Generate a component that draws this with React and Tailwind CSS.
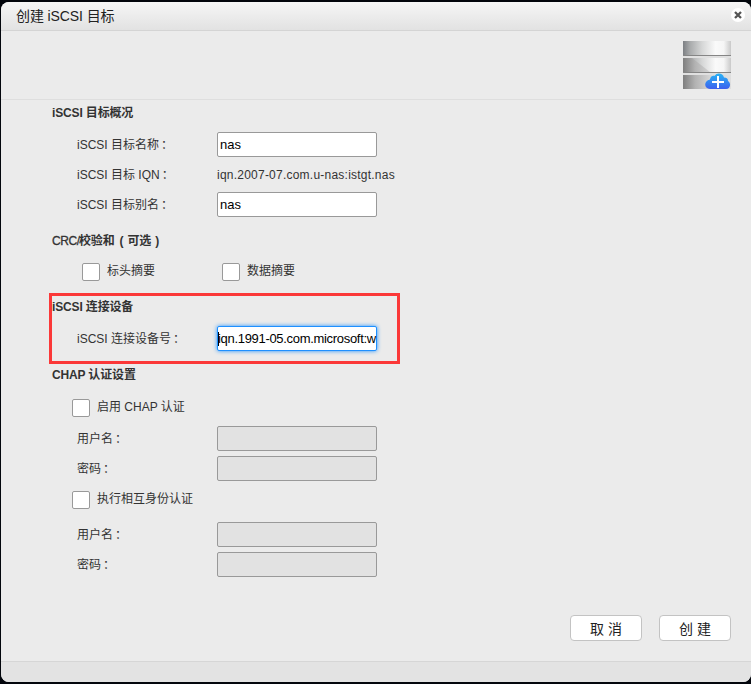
const inputBase = 'block h-[25px] w-[160px] rounded-[2px] border px-[2px] text-[13px] leading-[23px] outline-none';

function Heading({ children, className = '' }) {
  return (
    <h2 className={`flex items-center whitespace-pre text-[12px] font-bold tracking-[-0.15px] text-[#333] ${className}`}>
      {children}
    </h2>
  );
}

function Row({ label, children, className = '' }) {
  return (
    <div className={`flex h-[30px] items-start pt-[2px] leading-[27px] ${className}`}>
      <span className="w-[140px] shrink-0 whitespace-pre">
        {label}
        <span className="ml-[2px]">：</span>
      </span>
      {children}
    </div>
  );
}

function Field({ value = '', disabled = false }) {
  return (
    <input
      type="text"
      defaultValue={value}
      disabled={disabled}
      className={`${inputBase} border-[#999] ${disabled ? 'bg-[#e2e2e2]' : 'bg-white text-black'}`}
    />
  );
}

function Check({ children, className = '' }) {
  return (
    <label className={`flex h-[30px] items-center ${className}`}>
      <input type="checkbox" className="mr-[7px] size-[18px] shrink-0 appearance-none rounded-[2px] border border-[#999] bg-white" />
      <span className="-mt-[2px]">{children}</span>
    </label>
  );
}

function StorageIcon() {
  return (
    <svg width="48" height="49" viewBox="0 0 48 49">
      <defs>
        <linearGradient id="metal">
          <stop offset="0" stopColor="#7c7f83" />
          <stop offset=".15" stopColor="#a9abac" />
          <stop offset=".4" stopColor="#d6d7d7" />
          <stop offset=".68" stopColor="#fafafa" />
          <stop offset=".85" stopColor="#f5f5f5" />
          <stop offset="1" stopColor="#c9c9c9" />
        </linearGradient>
        <linearGradient id="shade" gradientUnits="userSpaceOnUse" x1="0" y1="0" x2="48" y2="0">
          <stop offset="0" stopColor="#7e7e7e" />
          <stop offset=".25" stopColor="#b2b2b2" />
          <stop offset=".6" stopColor="#d9d9d9" />
          <stop offset="1" stopColor="#dedede" />
        </linearGradient>
        <linearGradient id="cloud" x1="0" y1="0" x2="0" y2="1">
          <stop offset="0" stopColor="#28b4f5" />
          <stop offset="1" stopColor="#3c60ee" />
        </linearGradient>
      </defs>
      <rect y="0" width="48" height="14" fill="url(#metal)" />
      <rect y="14" width="48" height="1" fill="#858585" />
      <rect y="15" width="48" height="2" fill="#e0e0e0" />
      <rect y="17" width="48" height="14" fill="url(#metal)" />
      <path d="M0 17H9L27 31H0Z" fill="url(#shade)" />
      <rect y="31" width="48" height="1" fill="#858585" />
      <rect y="32" width="48" height="2" fill="#e0e0e0" />
      <rect y="34" width="48" height="14" fill="url(#shade)" />
      <path d="M27 48C20.700 48 20.500 39.500 27 38.500C27.500 34.500 30.700 34.500 31.500 35C34 31 40 32 41 36.500C44 36.500 45 38 45 40C48.500 42 47.500 48 43 48Z" fill="url(#cloud)" />
      <path d="M35 35v12M29 41h12" stroke="#fff" strokeWidth="2" />
    </svg>
  );
}

function ActionButton({ children }) {
  return (
    <button className="h-[26px] w-[72px] rounded-[4px] border border-[#c3c3c3] bg-white pt-[2px] text-[14px] leading-[22px] text-[#222]">
      {children}
    </button>
  );
}

export default function App() {
  return (
    <div className="h-[684px] w-[751px] overflow-hidden bg-[#03060c] pt-[2px] pl-px font-['Liberation_Sans','Noto_Sans_CJK_SC',sans-serif] text-[12px] leading-[18px] text-[#333]">
      <div className="flex h-[680px] w-[750px] flex-col overflow-hidden rounded-[8px] bg-[#ebebeb]">
        <header className="flex h-[29px] shrink-0 items-center justify-between border-b border-[#d4d4d4] bg-linear-to-b from-[#f6f6f6] to-[#e2e2e2] pr-[6px] pl-[15px]">
          <h1 className="text-[14px] tracking-[-0.1px] text-[#222]">创建 iSCSI 目标</h1>
          <button className="-mt-[2px] flex size-[14px] items-center justify-center rounded-full bg-white" aria-label="关闭">
            <svg width="8" height="8" viewBox="0 0 8 8">
              <path d="M1 1L7 7M7 1L1 7" stroke="#555" strokeWidth="2.300" />
            </svg>
          </button>
        </header>
        <div className="flex h-[69px] shrink-0 justify-end border-b border-[#dedede] pt-[10px] pr-[20px]">
          <StorageIcon />
        </div>

        <main className="flex flex-1 flex-col pl-[51px]">
          <Heading className="h-[25px]">iSCSI 目标概况</Heading>
          <div className="mt-[5px] pl-[25px]">
            <Row label="iSCSI 目标名称"><Field value="nas" /></Row>
            <Row label="iSCSI 目标 IQN"><span className="tracking-[0.23px]">iqn.2007-07.com.u-nas:istgt.nas</span></Row>
            <Row label="iSCSI 目标别名"><Field value="nas" /></Row>
          </div>

          <Heading className="mt-[8px] h-[25px]">
            <span className="w-[27px] font-normal tracking-[-0.400px] [-webkit-text-stroke:0.300px_#333]">CRC/</span>
            <span>校验和</span>
            <span className="mr-[4px] ml-[5px]">(</span>
            <span>可选</span>
            <span className="ml-[4px]">)</span>
          </Heading>
          <div className="mt-[4px] flex pl-[30px]">
            <Check className="w-[140px]">标头摘要</Check>
            <Check>数据摘要</Check>
          </div>

          <section className="mt-[6px] -ml-[3px] h-[71px] w-[351px] border-[3px] border-[#fb3838]">
            <Heading className="h-[21px]">iSCSI 连接设备</Heading>
            <Row label="iSCSI 连接设备号" className="mt-[7px] pl-[25px]">
              <div className={`${inputBase} relative border-[#1e90ff] bg-white whitespace-nowrap text-black shadow-[0_0_4px_#1e90ff]`}>
                <span className="absolute top-[5px] left-0 h-[14px] w-px bg-black" />
                <span className="-ml-[2px] tracking-[-0.310px]">iqn.1991-05.com.microsoft:w</span>
              </div>
            </Row>
          </section>

          <Heading className="h-[21px]">CHAP 认证设置</Heading>
          <Check className="mt-[8px] pl-[20px]">启用 CHAP 认证</Check>
          <div className="mt-px pl-[25px]">
            <Row label="用户名"><Field disabled /></Row>
            <Row label="密码"><Field disabled /></Row>
          </div>
          <Check className="mt-px pl-[20px]">执行相互身份认证</Check>
          <div className="mt-[5px] pl-[25px]">
            <Row label="用户名"><Field disabled /></Row>
            <Row label="密码"><Field disabled /></Row>
          </div>

          <div className="mt-[35px] flex justify-end gap-[17px] pr-[20px]">
            <ActionButton>取 消</ActionButton>
            <ActionButton>创 建</ActionButton>
          </div>
        </main>

        <footer className="h-[21px] shrink-0 border-t border-[#d6d6d6] bg-[#e3e3e3]" />
      </div>
    </div>
  );
}
